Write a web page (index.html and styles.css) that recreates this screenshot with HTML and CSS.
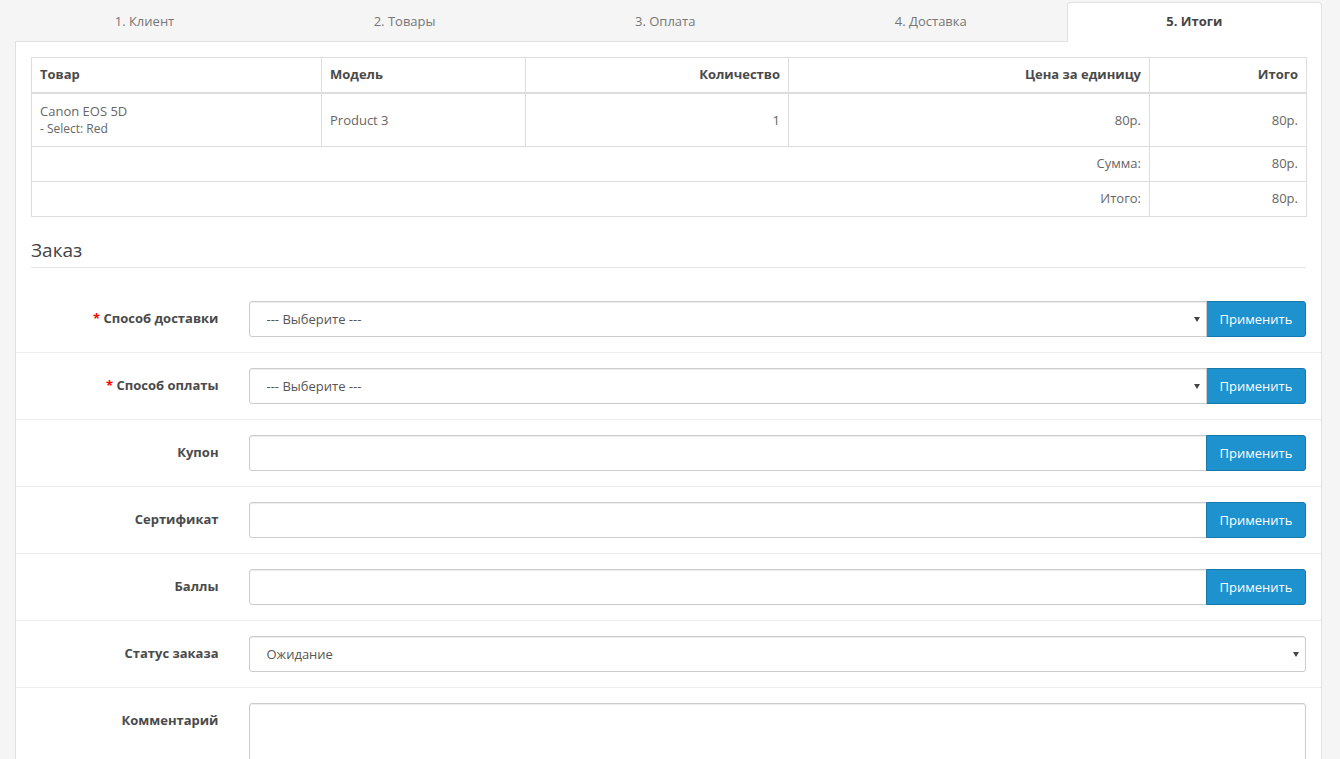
FILE: index.html
```html
<!DOCTYPE html>
<html lang="ru">
<head>
  <meta charset="UTF-8">
  <meta name="viewport" content="width=device-width,initial-scale=1">
  <title>Заказ</title>
  <link rel="stylesheet" href="styles.css">
</head>
<body>

  <ul class="order-tabs">
    <li class="tab">1. Клиент</li>
    <li class="tab">2. Товары</li>
    <li class="tab">3. Оплата</li>
    <li class="tab">4. Доставка</li>
    <li class="tab active">5. Итоги</li>
  </ul>

  <div class="tab-panel">
    <table class="cart-table">
      <colgroup>
        <col class="c-name">
        <col class="c-model">
        <col class="c-qty">
        <col class="c-price">
        <col class="c-total">
      </colgroup>
      <thead>
        <tr>
          <th>Товар</th>
          <th>Модель</th>
          <th class="right">Количество</th>
          <th class="right">Цена за единицу</th>
          <th class="right">Итого</th>
        </tr>
      </thead>
      <tbody>
        <tr class="product-row">
          <td>
            <div class="p-name">Canon EOS 5D</div>
            <div class="p-option">- Select: Red</div>
          </td>
          <td>Product 3</td>
          <td class="right">1</td>
          <td class="right">80р.</td>
          <td class="right">80р.</td>
        </tr>
        <tr>
          <td class="right" colspan="4">Сумма:</td>
          <td class="right">80р.</td>
        </tr>
        <tr>
          <td class="right" colspan="4">Итого:</td>
          <td class="right">80р.</td>
        </tr>
      </tbody>
    </table>

    <fieldset class="order-form">
      <legend>Заказ</legend>

      <div class="form-group required">
        <label class="control-label">Способ доставки</label>
        <div class="control">
          <div class="input-group">
            <span class="select-wrap"><select class="form-control"><option>--- Выберите ---</option></select></span>
            <button class="btn-apply" type="button">Применить</button>
          </div>
        </div>
      </div>

      <div class="form-group required">
        <label class="control-label">Способ оплаты</label>
        <div class="control">
          <div class="input-group">
            <span class="select-wrap"><select class="form-control"><option>--- Выберите ---</option></select></span>
            <button class="btn-apply" type="button">Применить</button>
          </div>
        </div>
      </div>

      <div class="form-group">
        <label class="control-label">Купон</label>
        <div class="control">
          <div class="input-group">
            <input class="form-control" type="text">
            <button class="btn-apply" type="button">Применить</button>
          </div>
        </div>
      </div>

      <div class="form-group">
        <label class="control-label">Сертификат</label>
        <div class="control">
          <div class="input-group">
            <input class="form-control" type="text">
            <button class="btn-apply" type="button">Применить</button>
          </div>
        </div>
      </div>

      <div class="form-group">
        <label class="control-label">Баллы</label>
        <div class="control">
          <div class="input-group">
            <input class="form-control" type="text">
            <button class="btn-apply" type="button">Применить</button>
          </div>
        </div>
      </div>

      <div class="form-group">
        <label class="control-label">Статус заказа</label>
        <div class="control">
          <span class="select-wrap full"><select class="form-control"><option>Ожидание</option></select></span>
        </div>
      </div>

      <div class="form-group">
        <label class="control-label">Комментарий</label>
        <div class="control">
          <textarea class="form-control" rows="5"></textarea>
        </div>
      </div>
    </fieldset>
  </div>

</body>
</html>
```

FILE: styles.css
```css
body {
  margin: 0;
  background-color: #f5f5f5;
  color: #666;
  font-family: 'Open Sans', 'Liberation Sans', sans-serif;
  font-size: 13px;
  line-height: 17px;
}
.order-tabs {
  display: flex;
  list-style: none;
  margin: 0 18px 0 15px;
  padding: 2px 0 0 0;
}
.tab {
  flex: 1 1 auto;
  text-align: center;
  padding: 10px 15px 11px;
  border: 1px solid transparent;
  border-bottom: 0;
  border-radius: 4px 4px 0 0;
  color: #777;
}
.tab.active {
  background: #fff;
  border-color: #e1e1e1;
  color: #444;
  font-weight: 700;
  margin-bottom: -1px;
  padding-bottom: 12px;
  position: relative;
}
.tab-panel {
  background: #fff;
  border: 1px solid #e1e1e1;
  border-bottom: 0;
  margin: 0 18px 0 15px;
  padding: 15px 15px 0;
}
.cart-table {
  width: 100%;
  border-collapse: collapse;
  table-layout: fixed;
  border: 1px solid #ddd;
  margin-bottom: 20px;
}
.c-name { width: 290px; }
.c-model { width: 204px; }
.c-qty { width: 263px; }
.c-price { width: 361px; }
.c-total { width: 157px; }
.cart-table th,
.cart-table td {
  border: 1px solid #ddd;
  padding: 8px 8px 9px;
  text-align: left;
  vertical-align: middle;
}
.cart-table th {
  border-bottom-width: 2px;
  color: #4a4a4a;
  font-weight: 700;
}
.cart-table .right { text-align: right; }
.product-row td { padding-top: 8px; padding-bottom: 8px; }
.p-name { line-height: 18px; }
.p-option { font-size: 12px; line-height: 18px; }

.order-form {
  border: 0;
  margin: 0;
  padding: 0;
}
.order-form legend {
  width: 100%;
  padding: 0 0 4px;
  margin-bottom: 18px;
  border-bottom: 1px solid #e5e5e5;
  font-size: 19px;
  line-height: 26px;
  color: #444;
}
.form-group {
  display: flex;
  margin: 0 -15px;
  padding: 15px 0;
}
.form-group + .form-group {
  border-top: 1px solid #ededed;
}
.control-label {
  box-sizing: border-box;
  width: 16.6667%;
  padding: 9px 15px 0;
  text-align: right;
  font-weight: 700;
  color: #4a4a4a;
}
.required .control-label::before {
  content: '* ';
  color: #f00;
}
.control {
  flex: 1;
  padding: 0 15px;
  min-width: 0;
}
.input-group {
  display: flex;
}
.form-control {
  box-sizing: border-box;
  display: block;
  width: 100%;
  height: 36px;
  padding: 8px 13px;
  border: 1px solid #ccc;
  border-radius: 3px;
  background: #fff;
  color: #555;
  font-family: inherit;
  font-size: 13px;
  box-shadow: inset 0 1px 1px rgba(0, 0, 0, .075);
}
select.form-control {
  appearance: none;
  -webkit-appearance: none;
  padding-left: 17px;
}
textarea.form-control {
  height: 105px;
  resize: vertical;
}
.select-wrap {
  position: relative;
  display: block;
  flex: 1;
}
.select-wrap::after {
  content: '';
  position: absolute;
  right: 7px;
  top: 16px;
  border-left: 3px solid transparent;
  border-right: 3px solid transparent;
  border-top: 5px solid #444;
}
.input-group .form-control {
  flex: 1;
  border-radius: 3px 0 0 3px;
}
.btn-apply {
  flex: 0 0 100px;
  height: 36px;
  border: 1px solid #1978ab;
  border-radius: 0 3px 3px 0;
  background: #1e91cf;
  color: #fff;
  font-family: inherit;
  font-size: 13px;
  margin-left: -1px;
}
```
